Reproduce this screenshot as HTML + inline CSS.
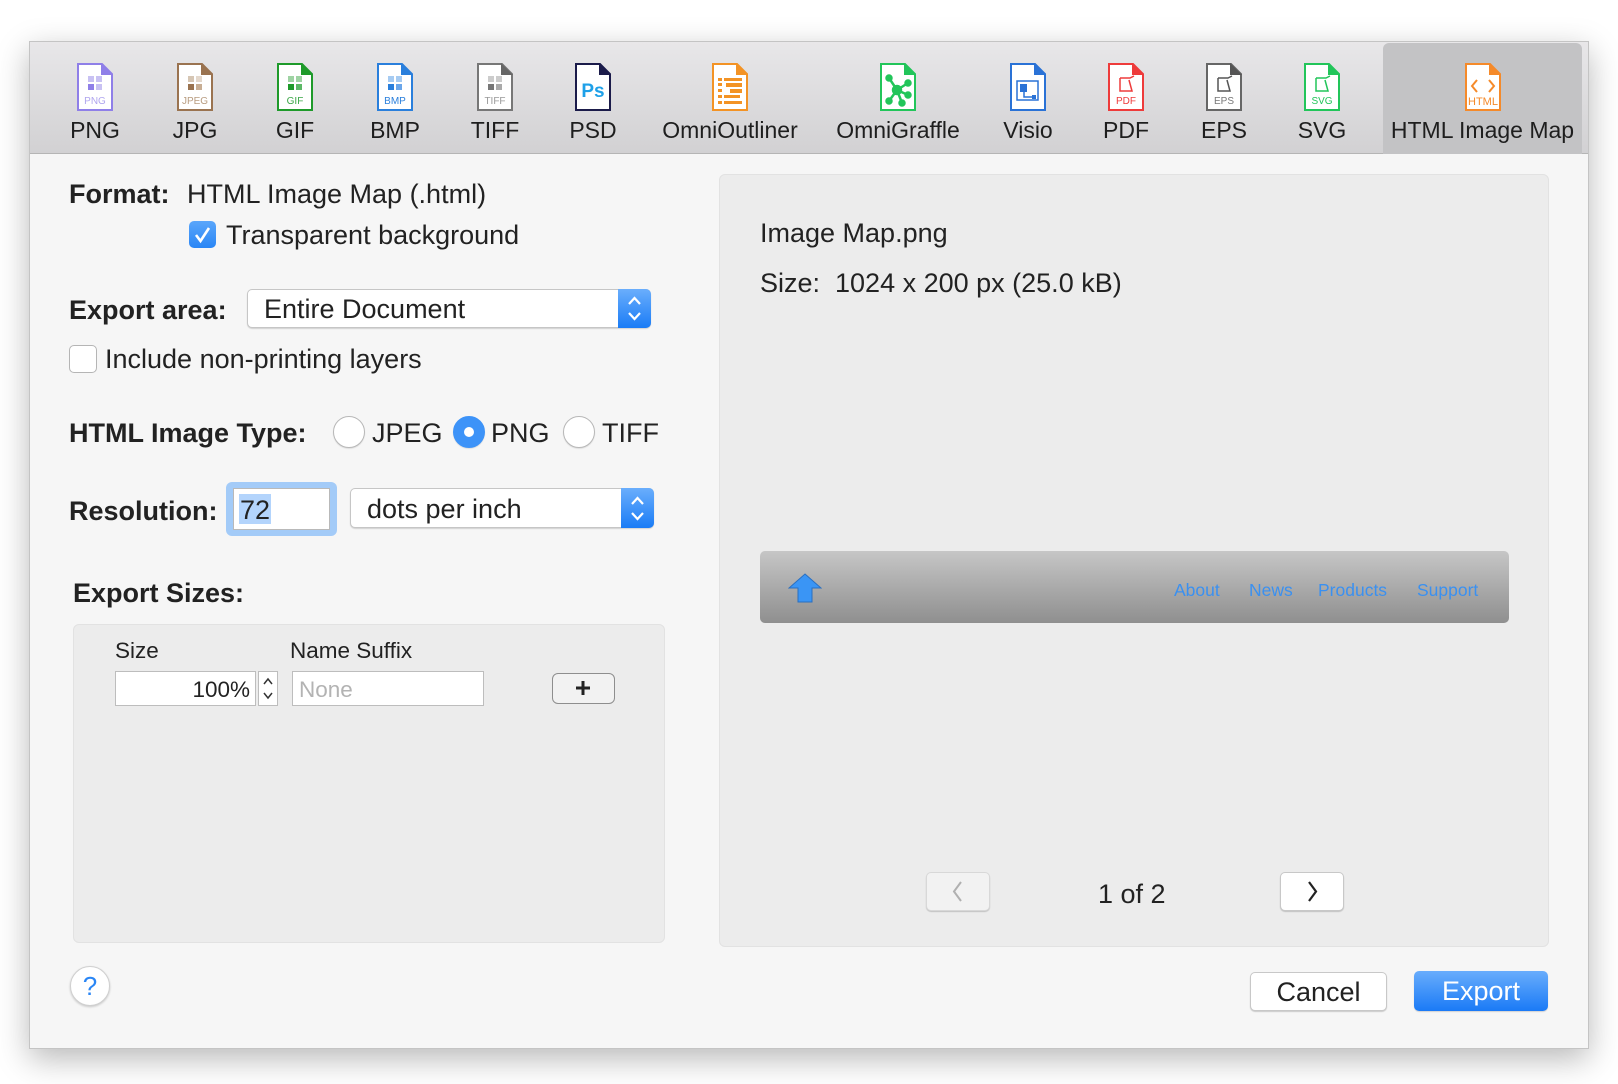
<!DOCTYPE html>
<html><head><meta charset="utf-8"><style>
*{box-sizing:border-box;margin:0;padding:0}
body{width:1618px;height:1084px;background:#fff;font-family:"Liberation Sans",sans-serif;color:#222;position:relative;overflow:hidden}
.a{position:absolute}
.win{left:29px;top:41px;width:1560px;height:1008px;background:#f6f6f6;border:1px solid #c4c4c4;box-shadow:0 10px 30px rgba(0,0,0,.28);overflow:hidden}
.tb{left:0;top:0;width:1560px;height:112px;background:linear-gradient(#e8e7e9,#d2d1d3);border-bottom:1px solid #b5b5b5}
.tab{position:absolute;top:0;height:111px;text-align:center;font-size:23px;color:#1e1e1e}
.tab svg{position:absolute;top:21px;left:50%;margin-left:-18px}
.tab span{position:absolute;top:75px;left:0;right:0;white-space:nowrap}
.t{position:absolute;white-space:nowrap;font-size:27px;line-height:30px}
.b{font-weight:bold}
.pop{position:absolute;background:#fff;border:1px solid #c6c6c6;border-radius:5px;box-shadow:0 1px 1px rgba(0,0,0,.15)}
.pop .bl{position:absolute;right:-1px;top:-1px;bottom:-1px;width:33px;background:linear-gradient(#6aaefc,#1a7cf6);border-radius:0 5px 5px 0}
.radio{position:absolute;width:32px;height:32px;border-radius:50%;background:#fff;border:1px solid #b8b8b8;box-shadow:0 1px 1px rgba(0,0,0,.1)}
.btn{position:absolute;background:#fff;border:1px solid #c8c8c8;border-radius:5px;box-shadow:0 1px 1px rgba(0,0,0,.18);text-align:center}
</style></head><body>
<div class="a win">
 <div class="a tb">
  <div class="tab" style="left:15px;width:100px"><svg width="36" height="48"><path d="M1 1H25L35 11V47H1Z" fill="#fff" stroke="#8f7fe8" stroke-width="2"/><path d="M24 0L36 12H24Z" fill="#8f7fe8"/><rect x="11" y="13" width="6" height="6" fill="#c8c1f3"/><rect x="19" y="13" width="6" height="6" fill="#c8c1f3"/><rect x="11" y="21" width="6" height="6" fill="#8f7fe8"/><rect x="19" y="21" width="6" height="6" fill="#c8c1f3"/><text x="18" y="41" font-size="10" text-anchor="middle" fill="#b0a6ef" font-family="Liberation Sans">PNG</text></svg><span>PNG</span></div>
  <div class="tab" style="left:115px;width:100px"><svg width="36" height="48"><path d="M1 1H25L35 11V47H1Z" fill="#fff" stroke="#9a7350" stroke-width="2"/><path d="M24 0L36 12H24Z" fill="#9a7350"/><rect x="11" y="13" width="6" height="6" fill="#d6c6b4"/><rect x="19" y="13" width="6" height="6" fill="#e4d8cc"/><rect x="11" y="21" width="6" height="6" fill="#9a7350"/><rect x="19" y="21" width="6" height="6" fill="#c8ae94"/><text x="18" y="41" font-size="10" text-anchor="middle" fill="#b89c80" font-family="Liberation Sans">JPEG</text></svg><span>JPG</span></div>
  <div class="tab" style="left:215px;width:100px"><svg width="36" height="48"><path d="M1 1H25L35 11V47H1Z" fill="#fff" stroke="#1e9a2a" stroke-width="2"/><path d="M24 0L36 12H24Z" fill="#1e9a2a"/><rect x="11" y="13" width="6" height="6" fill="#9ed3a3"/><rect x="19" y="13" width="6" height="6" fill="#9ed3a3"/><rect x="11" y="21" width="6" height="6" fill="#1e9a2a"/><rect x="19" y="21" width="6" height="6" fill="#5cb866"/><text x="18" y="41" font-size="10" text-anchor="middle" fill="#3aa646" font-family="Liberation Sans">GIF</text></svg><span>GIF</span></div>
  <div class="tab" style="left:315px;width:100px"><svg width="36" height="48"><path d="M1 1H25L35 11V47H1Z" fill="#fff" stroke="#2a7fdc" stroke-width="2"/><path d="M24 0L36 12H24Z" fill="#2a7fdc"/><rect x="11" y="13" width="6" height="6" fill="#a6cbf2"/><rect x="19" y="13" width="6" height="6" fill="#a6cbf2"/><rect x="11" y="21" width="6" height="6" fill="#2a7fdc"/><rect x="19" y="21" width="6" height="6" fill="#6aa6ea"/><text x="18" y="41" font-size="10" text-anchor="middle" fill="#2a7fdc" font-family="Liberation Sans">BMP</text></svg><span>BMP</span></div>
  <div class="tab" style="left:415px;width:100px"><svg width="36" height="48"><path d="M1 1H25L35 11V47H1Z" fill="#fff" stroke="#777" stroke-width="2"/><path d="M24 0L36 12H24Z" fill="#666"/><rect x="11" y="13" width="6" height="6" fill="#ccc"/><rect x="19" y="13" width="6" height="6" fill="#ccc"/><rect x="11" y="21" width="6" height="6" fill="#777"/><rect x="19" y="21" width="6" height="6" fill="#aaa"/><text x="18" y="41" font-size="10" text-anchor="middle" fill="#999" font-family="Liberation Sans">TIFF</text></svg><span>TIFF</span></div>
  <div class="tab" style="left:513px;width:100px"><svg width="36" height="48"><path d="M1 1H25L35 11V47H1Z" fill="#fff" stroke="#1b1b4a" stroke-width="2"/><path d="M24 0L36 12H24Z" fill="#1b1b4a"/><text x="18" y="34" font-size="19" font-weight="bold" text-anchor="middle" fill="#1ea0e8" font-family="Liberation Sans">Ps</text></svg><span>PSD</span></div>
  <div class="tab" style="left:620px;width:160px"><svg width="36" height="48"><path d="M1 1H25L35 11V47H1Z" fill="#fff" stroke="#f39325" stroke-width="2"/><path d="M24 0L36 12H24Z" fill="#f39325"/><g fill="#f39325"><rect x="6" y="15" width="4" height="3"/><rect x="12" y="15" width="18" height="3"/><rect x="6" y="20" width="4" height="3"/><rect x="14" y="20" width="16" height="4"/><rect x="6" y="26" width="4" height="3"/><rect x="18" y="26" width="12" height="4"/><rect x="6" y="32" width="4" height="3"/><rect x="12" y="32" width="16" height="3"/><rect x="6" y="38" width="4" height="3"/><rect x="12" y="38" width="18" height="3"/></g></svg><span>OmniOutliner</span></div>
  <div class="tab" style="left:788px;width:160px"><svg width="36" height="48"><path d="M1 1H25L35 11V47H1Z" fill="#fff" stroke="#22c55a" stroke-width="2"/><path d="M24 0L36 12H24Z" fill="#22c55a"/><g stroke="#22c55a" stroke-width="2.5" fill="#22c55a"><line x1="17" y1="27" x2="9" y2="15"/><line x1="17" y1="27" x2="28" y2="20"/><line x1="17" y1="27" x2="28" y2="32"/><line x1="17" y1="27" x2="9" y2="38"/><line x1="17" y1="27" x2="22" y2="40"/><circle cx="17" cy="27" r="4"/><circle cx="9" cy="15" r="2.5"/><circle cx="28" cy="20" r="2.5"/><circle cx="28" cy="32" r="2.5"/><circle cx="9" cy="38" r="2.5"/><circle cx="22" cy="40" r="2.5"/></g></svg><span>OmniGraffle</span></div>
  <div class="tab" style="left:948px;width:100px"><svg width="36" height="48"><path d="M1 1H25L35 11V47H1Z" fill="#fff" stroke="#2a72d6" stroke-width="2"/><path d="M24 0L36 12H24Z" fill="#2a72d6"/><rect x="7" y="18" width="21" height="19" fill="#fff" stroke="#2a72d6" stroke-width="1.5"/><rect x="10" y="21" width="7" height="8" fill="#2a72d6"/><path d="M14 29V34H24" stroke="#2a72d6" stroke-width="1.5" fill="none"/><rect x="22" y="32" width="4" height="4" fill="#2a72d6"/></svg><span>Visio</span></div>
  <div class="tab" style="left:1046px;width:100px"><svg width="36" height="48"><path d="M1 1H25L35 11V47H1Z" fill="#fff" stroke="#ee3b3b" stroke-width="2"/><path d="M24 0L36 12H24Z" fill="#ee3b3b"/><path d="M12 15H22L26 13M12 15V28H24L21 17" stroke="#ee3b3b" stroke-width="1.5" fill="none"/><text x="18" y="41" font-size="10" text-anchor="middle" fill="#ee3b3b" font-family="Liberation Sans">PDF</text></svg><span>PDF</span></div>
  <div class="tab" style="left:1144px;width:100px"><svg width="36" height="48"><path d="M1 1H25L35 11V47H1Z" fill="#fff" stroke="#666" stroke-width="2"/><path d="M24 0L36 12H24Z" fill="#555"/><path d="M12 15H22L26 13M12 15V28H24L21 17" stroke="#555" stroke-width="1.5" fill="none"/><text x="18" y="41" font-size="10" text-anchor="middle" fill="#777" font-family="Liberation Sans">EPS</text></svg><span>EPS</span></div>
  <div class="tab" style="left:1242px;width:100px"><svg width="36" height="48"><path d="M1 1H25L35 11V47H1Z" fill="#fff" stroke="#22c55a" stroke-width="2"/><path d="M24 0L36 12H24Z" fill="#22c55a"/><path d="M12 15H22L26 13M12 15V28H24L21 17" stroke="#22c55a" stroke-width="1.5" fill="none"/><text x="18" y="41" font-size="10" text-anchor="middle" fill="#22c55a" font-family="Liberation Sans">SVG</text></svg><span>SVG</span></div>
  <div class="tab" style="left:1353px;width:199px;background:#c3c3c5;top:1px;border-radius:6px 6px 0 0"><svg width="36" height="48" style="top:20px"><path d="M1 1H25L35 11V47H1Z" fill="#fff" stroke="#f58a2a" stroke-width="2"/><path d="M24 0L36 12H24Z" fill="#f58a2a"/><path d="M12 17L7 23L12 29M24 17L29 23L24 29" stroke="#f58a2a" stroke-width="2" fill="none"/><text x="18" y="42" font-size="11" text-anchor="middle" fill="#f58a2a" font-family="Liberation Sans">HTML</text></svg><span style="top:74px">HTML Image Map</span></div>
 </div>
</div>
<!-- left -->
<div class="t b" style="left:69px;top:179px">Format:</div>
<div class="t" style="left:187px;top:179px">HTML Image Map (.html)</div>
<div class="a" style="left:189px;top:221px;width:27px;height:27px;border-radius:5px;background:linear-gradient(#5aa6fb,#2a86f5)"><svg width="27" height="27"><path d="M7 14L11.5 20L20 7" stroke="#fff" stroke-width="2.6" fill="none"/></svg></div>
<div class="t" style="left:226px;top:220px">Transparent background</div>
<div class="t b" style="left:69px;top:295px">Export area:</div>
<div class="pop" style="left:247px;top:289px;width:404px;height:39px"><div class="t" style="left:16px;top:4px">Entire Document</div><div class="bl"><svg width="33" height="39"><path d="M11 15L16.5 9L22 15M11 24L16.5 30L22 24" stroke="#fff" stroke-width="2.2" fill="none"/></svg></div></div>
<div class="a" style="left:69px;top:345px;width:28px;height:28px;border-radius:5px;background:#fff;border:1px solid #b5b5b5"></div>
<div class="t" style="left:105px;top:344px">Include non-printing layers</div>
<div class="t b" style="left:69px;top:418px">HTML Image Type:</div>
<div class="radio" style="left:333px;top:416px"></div>
<div class="t" style="left:372px;top:418px">JPEG</div>
<div class="radio" style="left:453px;top:416px;background:#3d93f8;border-color:#3d93f8"><div class="a" style="left:10px;top:10px;width:10px;height:10px;border-radius:50%;background:#fff"></div></div>
<div class="t" style="left:491px;top:418px">PNG</div>
<div class="radio" style="left:563px;top:416px"></div>
<div class="t" style="left:602px;top:418px">TIFF</div>
<div class="t b" style="left:69px;top:496px">Resolution:</div>
<div class="a" style="left:226px;top:482px;width:111px;height:54px;border-radius:6px;background:#a3cbf8"></div>
<div class="a" style="left:233px;top:488px;width:97px;height:42px;background:#fff;border:1px solid #b9b9b9"></div>
<div class="a" style="left:239px;top:494px;width:32px;height:30px;background:#b3d4fc"></div>
<div class="t" style="left:240px;top:495px">72</div>
<div class="pop" style="left:350px;top:488px;width:304px;height:40px"><div class="t" style="left:16px;top:5px">dots per inch</div><div class="bl"><svg width="33" height="40"><path d="M11 16L16.5 10L22 16M11 25L16.5 31L22 25" stroke="#fff" stroke-width="2.2" fill="none"/></svg></div></div>
<div class="t b" style="left:73px;top:578px">Export Sizes:</div>
<div class="a" style="left:73px;top:624px;width:592px;height:319px;background:#ececec;border:1px solid #e2e2e2;border-radius:6px"></div>
<div class="t" style="left:115px;top:636px;font-size:22.5px">Size</div>
<div class="t" style="left:290px;top:636px;font-size:22.5px">Name Suffix</div>
<div class="a" style="left:115px;top:671px;width:141px;height:35px;background:#fff;border:1px solid #bdbdbd"></div>
<div class="t" style="left:150px;top:675px;font-size:22.5px;width:100px;text-align:right">100%</div>
<div class="a" style="left:258px;top:671px;width:20px;height:35px;background:#fff;border:1px solid #bdbdbd"><svg width="18" height="33"><path d="M5 12L9 7L13 12M5 21L9 26L13 21" stroke="#333" stroke-width="1.5" fill="none"/></svg></div>
<div class="a" style="left:292px;top:671px;width:192px;height:35px;background:#fff;border:1px solid #bdbdbd"></div>
<div class="t" style="left:299px;top:675px;font-size:22.5px;color:#b3b3b3">None</div>
<div class="a" style="left:552px;top:673px;width:63px;height:31px;border:1.5px solid #8e8e8e;border-radius:6px;background:#f2f2f2"><svg width="60" height="28"><path d="M30 7V21M23 14H37" stroke="#222" stroke-width="3"/></svg></div>
<div class="a" style="left:70px;top:966px;width:40px;height:40px;border-radius:50%;background:#fff;border:1px solid #d0d0d0;box-shadow:0 1px 2px rgba(0,0,0,.2);text-align:center;color:#2a86f5;font-size:26px;line-height:38px">?</div>
<!-- right -->
<div class="a" style="left:719px;top:174px;width:830px;height:773px;background:#ececec;border:1px solid #e2e2e2;border-radius:6px"></div>
<div class="t" style="left:760px;top:218px">Image Map.png</div>
<div class="t" style="left:760px;top:268px">Size:&nbsp;&nbsp;1024 x 200 px (25.0 kB)</div>
<div class="a" style="left:760px;top:551px;width:749px;height:72px;border-radius:5px;background:linear-gradient(#c6c6c6,#8f8f8f)"></div>
<svg class="a" style="left:788px;top:573px" width="34" height="30"><path d="M17 1L33 15H24V29H10V15H1Z" fill="#3a95f5" stroke="#2a6fc0" stroke-width="1"/></svg>
<div class="t" style="left:1174px;top:575px;font-size:17.5px;color:#3a90f0">About</div>
<div class="t" style="left:1249px;top:575px;font-size:17.5px;color:#3a90f0">News</div>
<div class="t" style="left:1318px;top:575px;font-size:17.5px;color:#3a90f0">Products</div>
<div class="t" style="left:1417px;top:575px;font-size:17.5px;color:#3a90f0">Support</div>
<div class="btn" style="left:926px;top:872px;width:64px;height:39px;background:#f2f2f2;border-color:#d8d8d8"><svg width="62" height="37"><path d="M34 9L27 18.5L34 28" stroke="#b0b0b0" stroke-width="2" fill="none"/></svg></div>
<div class="t" style="left:1098px;top:879px">1 of 2</div>
<div class="btn" style="left:1280px;top:872px;width:64px;height:39px"><svg width="62" height="37"><path d="M28 9L35 18.5L28 28" stroke="#222" stroke-width="2.2" fill="none"/></svg></div>
<div class="btn" style="left:1250px;top:972px;width:137px;height:39px"><div class="t" style="left:0;right:0;top:4px">Cancel</div></div>
<div class="a" style="left:1414px;top:971px;width:134px;height:40px;border-radius:5px;background:linear-gradient(#69adfc,#1a7af6);box-shadow:0 1px 1px rgba(0,0,0,.15)"><div class="t" style="left:0;right:0;top:5px;text-align:center;color:#fff">Export</div></div>
</body></html>
